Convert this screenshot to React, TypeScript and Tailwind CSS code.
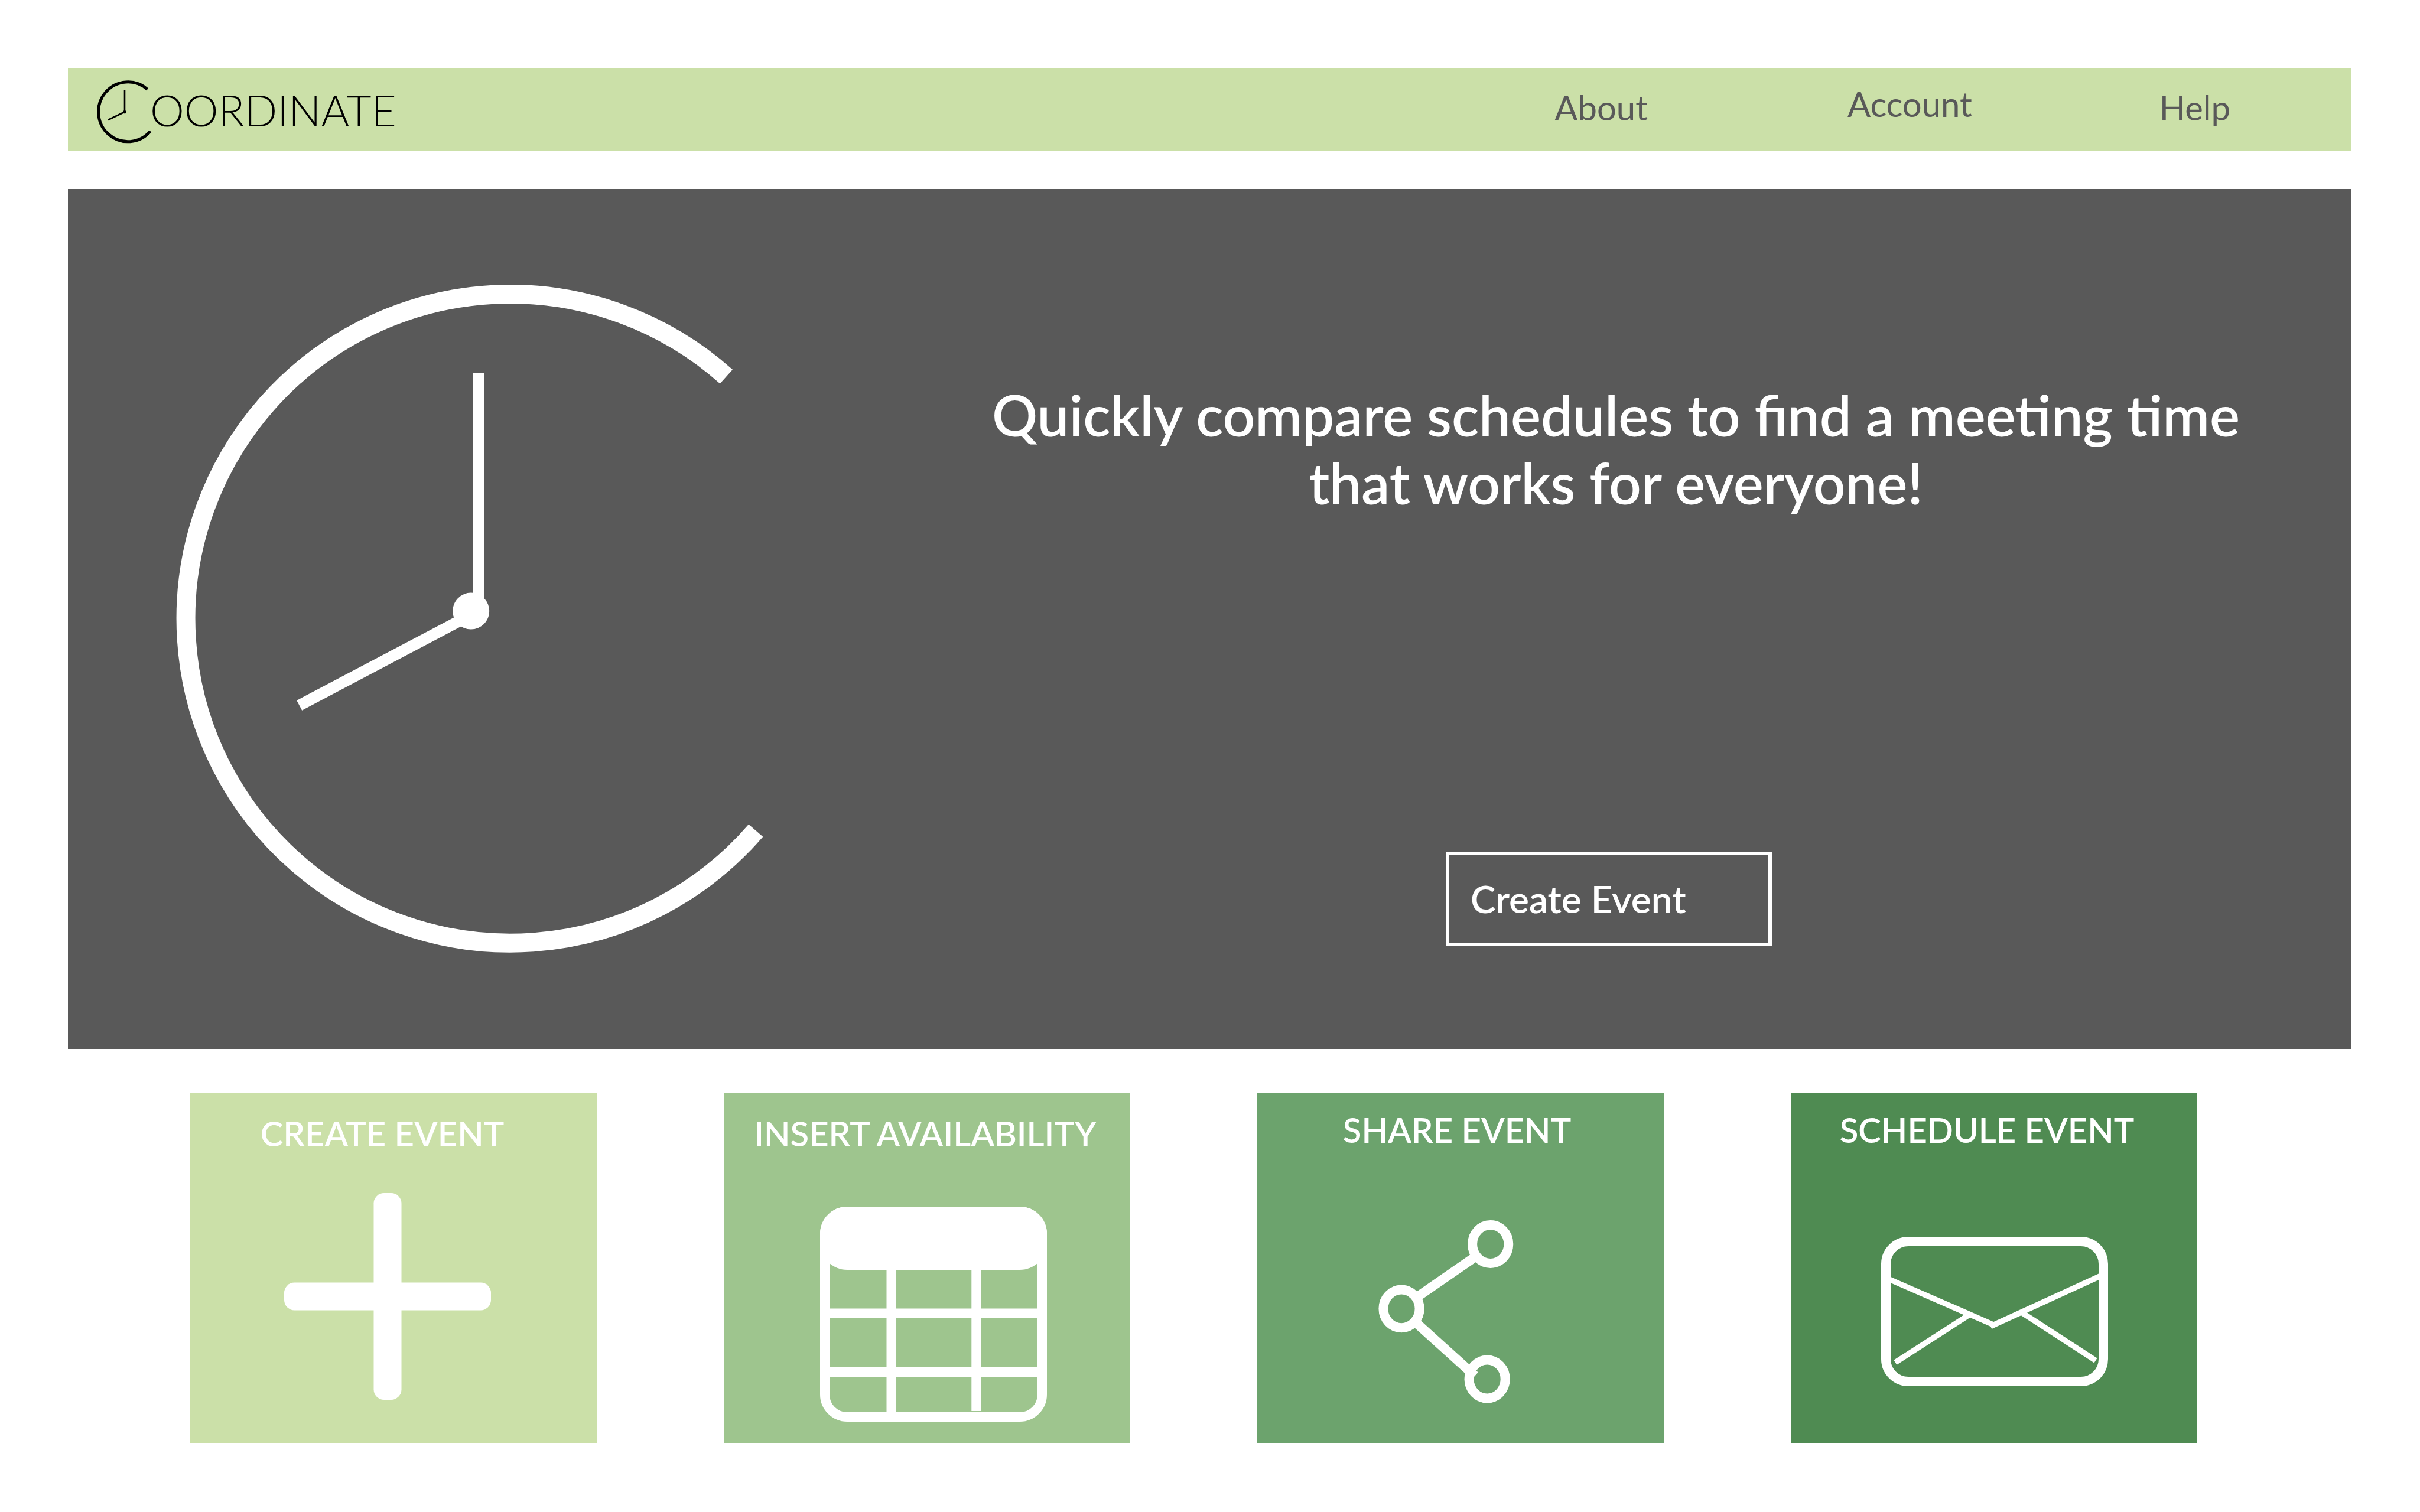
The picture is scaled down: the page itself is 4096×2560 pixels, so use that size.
import type { ReactNode } from "react";

function LogoMark() {
  return (
    <svg viewBox="162 135 96 108" className="mt-[6px] h-[108px] w-[96px] shrink-0" fill="none" stroke="#000" aria-hidden="true">
      <path d="M249.5 151.3A50 50.5 0 1 0 254.5 222.2" strokeWidth="5" />
      <path d="M211 152.6V190" strokeWidth="2.6" />
      <path d="M211 189.5L183 203" strokeWidth="3" />
      <circle cx="211" cy="189.7" r="2.6" fill="#000" stroke="none" />
    </svg>
  );
}

function HeroClock() {
  return (
    <svg viewBox="298 482 994 1132" className="h-[1132px] w-[994px] shrink-0" fill="none" stroke="#fff" aria-hidden="true">
      <path d="M1229.3 637.6A549 549.4 0 1 0 1279.2 1406.3" strokeWidth="32" />
      <path d="M810 631V1034" strokeWidth="19" />
      <path d="M506.7 1194.3L797 1041" strokeWidth="19" />
      <circle cx="797.2" cy="1034.6" r="31" fill="#fff" stroke="none" />
    </svg>
  );
}

function PlusIcon() {
  return (
    <svg viewBox="0 0 350 350" className="h-[350px] w-[350px]" fill="#fff" aria-hidden="true">
      <rect x="151.5" y="0" width="47" height="350" rx="17.5" />
      <rect x="0" y="151.5" width="350" height="47" rx="17.5" />
    </svg>
  );
}

function CalendarIcon() {
  return (
    <svg viewBox="1388 2043 384 364" className="h-[364px] w-[384px]" fill="none" stroke="#fff" aria-hidden="true">
      <rect x="1396" y="2051" width="368" height="348" rx="38" strokeWidth="16" />
      <rect x="1388" y="2043" width="384" height="107" rx="46" fill="#fff" stroke="none" />
      <path d="M1508.5 2145V2395M1652.3 2145V2389M1400 2223.5H1760M1400 2323H1760" strokeWidth="16" />
    </svg>
  );
}

function ShareIcon() {
  return (
    <svg viewBox="2332 2066 229 310" className="h-[310px] w-[229px]" fill="none" stroke="#fff" strokeWidth="16" aria-hidden="true">
      <ellipse cx="2521.7" cy="2106.5" rx="30.6" ry="32.4" />
      <ellipse cx="2371" cy="2215.8" rx="30.6" ry="32.4" />
      <ellipse cx="2516.1" cy="2335" rx="30.6" ry="32.4" />
      <path d="M2399 2195L2495 2128.7M2396.5 2240.2L2495.4 2329.5" />
    </svg>
  );
}

function EnvelopeIcon() {
  return (
    <svg viewBox="3184 2094 384 253" className="h-[253px] w-[384px]" fill="none" stroke="#fff" strokeWidth="9.5" aria-hidden="true">
      <rect x="3192" y="2102" width="368" height="237" rx="38" strokeWidth="16" />
      <path d="M3192 2163.5L3374 2243M3568 2154.5L3369.2 2245.6M3207.9 2306.8L3335 2224.8M3547 2303.4L3420 2221" />
    </svg>
  );
}

type Step = {
  title: string;
  card: string;
  heading: string;
  art: string;
  icon: ReactNode;
};

const steps: Step[] = [
  { title: "CREATE EVENT", card: "bg-[#cbe0a8] pt-[34px]", heading: "pr-[38px]", art: "pt-[66px] pr-[20px]", icon: <PlusIcon /> },
  { title: "INSERT AVAILABILITY", card: "bg-[#9ec58e] pt-[34px]", heading: "pr-[6px]", art: "pt-[89px] pl-[22px]", icon: <CalendarIcon /> },
  { title: "SHARE EVENT", card: "bg-[#6ca36d] pt-[28px]", heading: "pr-[12px]", art: "pt-[118px] pr-[50px]", icon: <ShareIcon /> },
  { title: "SCHEDULE EVENT", card: "bg-[#4f8b52] pt-[28px]", heading: "pr-[24px]", art: "pt-[146px] pl-[2px]", icon: <EnvelopeIcon /> },
];

export default function App() {
  return (
    <div className="min-h-screen bg-white py-[115px] font-['Lato',sans-serif]">
      <header className="mr-[116px] ml-[115px] flex h-[141px] items-center bg-[#cbe0a8] pr-[205px] pl-[47px]">
        <a href="#home" className="flex items-center text-[73px] leading-[88px] font-light text-black">
          <LogoMark />
          <span className="-ml-1">OORDINATE</span>
        </a>
        <nav className="ml-auto flex items-center pb-[8px] text-[58px] leading-[70px] text-[#595959]">
          <a href="#about">About</a>
          <a href="#account" className="ml-[338px] pb-[12px]">Account</a>
          <a href="#help" className="ml-[317px]">Help</a>
        </nav>
      </header>

      <main>
        <section className="mt-[64px] mr-[116px] ml-[115px] flex h-[1456px] bg-[#595959] pl-[183px] text-white">
          <div className="pt-[162px]">
            <HeroClock />
          </div>
          <div className="ml-[198px] flex flex-1 flex-col items-center pt-[324px]">
            <h1 className="text-center text-[96px] leading-[115px] font-semibold">
              Quickly compare schedules to find a meeting time
              <br />
              that works for everyone!
            </h1>
            <button
              type="button"
              className="mt-[568px] mr-[24px] h-[160px] w-[552px] border-6 border-white pl-[36px] text-left text-[64px] leading-[76px] font-semibold"
            >
              Create Event
            </button>
          </div>
        </section>

        <section className="mt-[74px] mr-[377px] ml-[322px] grid grid-cols-4 gap-[215px]">
          {steps.map((step) => (
            <article key={step.title} className={`flex h-[594px] flex-col items-center text-white ${step.card}`}>
              <h2 className={`text-[58px] leading-[70px] font-semibold whitespace-nowrap ${step.heading}`}>{step.title}</h2>
              <div className={step.art}>{step.icon}</div>
            </article>
          ))}
        </section>
      </main>
    </div>
  );
}
